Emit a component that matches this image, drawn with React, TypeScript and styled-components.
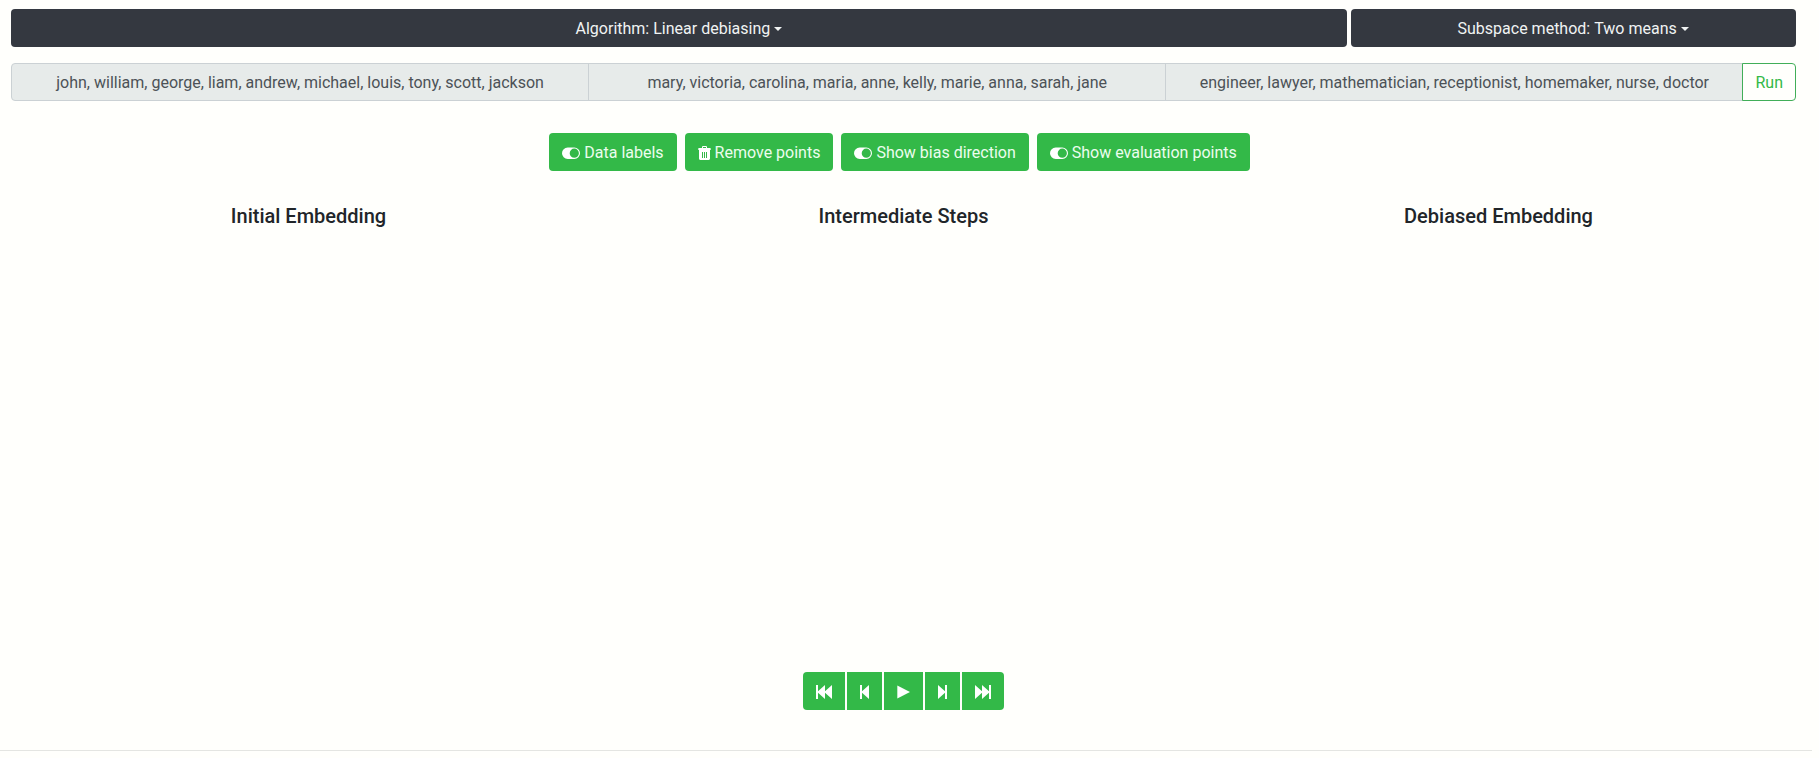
import React from "react";
import styled, { createGlobalStyle } from "styled-components";

const GlobalStyle = createGlobalStyle`
  *, *::before, *::after { box-sizing: border-box; }
  body {
    margin: 0;
    background: #fffffc;
    color: #212529;
    font-family: Roboto, "Liberation Sans", sans-serif;
    font-size: 16px;
    line-height: 24px;
  }
`;

const Page = styled.div`
  padding-right: 7px;
`;

const Main = styled.main`
  display: flex;
  flex-direction: column;
  padding: 9px 16px 0 11px;
`;

const MethodBar = styled.div`
  display: flex;
  gap: 4px;
`;

const Picker = styled.label<{ $grow: number }>`
  flex: ${(p) => p.$grow} 1 0;
  display: flex;
  align-items: center;
  justify-content: center;
  gap: 4px;
  height: 38px;
  padding-top: 2px;
  border-radius: 4px;
  background: #343840;
  color: #f0f3f3;
  cursor: pointer;
`;

const PickerSelect = styled.select`
  appearance: none;
  border: 0;
  padding: 0;
  background: transparent;
  color: inherit;
  font: inherit;
  cursor: pointer;
`;

const Caret = styled.span`
  border-top: 4px solid currentColor;
  border-right: 4px solid transparent;
  border-left: 4px solid transparent;
`;

const WordForm = styled.form`
  display: flex;
  margin-top: 16px;
`;

const WordInput = styled.input`
  flex: 1 1 0;
  min-width: 0;
  height: 38px;
  margin: 0 -1px 0 0;
  padding: 6px 12px;
  border: 1px solid #cbd1d4;
  background: #e7ebea;
  color: #4c5257;
  font: inherit;
  text-align: center;

  &:first-child {
    border-radius: 4px 0 0 4px;
  }
`;

const RunButton = styled.button`
  position: relative;
  height: 38px;
  padding: 2px 12px 0;
  border: 1px solid #41ae58;
  border-radius: 0 4px 4px 0;
  background: #fffffc;
  color: #33b948;
  font: inherit;
  cursor: pointer;
`;

const Toolbar = styled.div`
  display: flex;
  justify-content: center;
  gap: 8px;
  margin-top: 32px;
  padding-right: 8px;
`;

const GreenButton = styled.button`
  display: flex;
  align-items: center;
  justify-content: center;
  gap: 4px;
  height: 38px;
  padding: 2px 13px 0;
  border: 0;
  border-radius: 4px;
  background: #33b948;
  color: #ecfdee;
  font: inherit;
  cursor: pointer;
`;

const Panels = styled.div`
  display: grid;
  grid-template-columns: repeat(3, 1fr);
  margin-top: 33px;
`;

const Panel = styled.section`
  min-height: 468px;
`;

const PanelTitle = styled.h5`
  margin: 0;
  font-size: 20px;
  font-weight: 500;
  line-height: 24px;
  text-align: center;
`;

const Playback = styled.div`
  display: flex;
  justify-content: center;
  gap: 2px;
`;

const PlayButton = styled(GreenButton)`
  border-radius: 0;

  &:first-child {
    border-radius: 4px 0 0 4px;
  }
  &:last-child {
    border-radius: 0 4px 4px 0;
  }
`;

const Divider = styled.hr`
  margin: 40px 0 0;
  border: 0;
  border-top: 1px solid #e4e5e2;
`;

const ToggleIcon = () => (
  <svg width="18" height="16" viewBox="0 0 18 16" aria-hidden="true">
    <path
      fill="#fff"
      fillRule="evenodd"
      d="M5.7 2.5h6.6a5.7 5.7 0 0 1 0 11.4H5.7a5.7 5.7 0 0 1 0-11.4Zm6.6 1.1a4.6 4.6 0 1 0 0 9.2 4.6 4.6 0 0 0 0-9.2Z"
    />
  </svg>
);

const TrashIcon = () => (
  <svg width="13" height="16" viewBox="0 0 13 16" aria-hidden="true">
    <path
      fill="#fff"
      fillRule="evenodd"
      d="M4 3V2.2C4 1.5 4.5 1 5.2 1h2.6C8.500 1 9 1.500 9 2.200V3h3.200c.3 0 .5.2.5.5V5H.3V3.500c0-.3.2-.5.5-.5Zm1 0h3V2H5ZM1 5h11v8.500c0 .8-.7 1.500-1.500 1.500h-8C1.700 15 1 14.300 1 13.500ZM4 7v6h1V7Zm2 0v6h1V7Zm2 0v6h1V7Z"
    />
  </svg>
);

const transportPaths = {
  first: { width: 16, d: "M0 1h2v6.2L9 1v6.2L16 1v14L9 8.8V15L2 8.8V15H0Z" },
  previous: { width: 9, d: "M0 1h2v6.2L9 1v14L2 8.8V15H0Z" },
  play: { width: 13, d: "M.3 1.4 13 8 .3 14.6Z" },
  next: { width: 9, d: "M9 1H7v6.2L0 1v14l7-6.2V15h2Z" },
  last: { width: 16, d: "M16 1h-2v6.2L7 1v6.2L0 1v14l7-6.2V15l7-6.2V15h2Z" },
};

type Transport = keyof typeof transportPaths;

const TransportIcon = ({ name }: { name: Transport }) => {
  const { width, d } = transportPaths[name];
  return (
    <svg width={width} height="16" viewBox={`0 0 ${width} 16`} aria-hidden="true">
      <path fill="#fff" d={d} />
    </svg>
  );
};

const methods = [
  { label: "Algorithm:", value: "Linear debiasing", grow: 3 },
  { label: "Subspace method:", value: "Two means", grow: 1 },
];

const wordSets = [
  { label: "First seed words", words: "john, william, george, liam, andrew, michael, louis, tony, scott, jackson" },
  { label: "Second seed words", words: "mary, victoria, carolina, maria, anne, kelly, marie, anna, sarah, jane" },
  { label: "Evaluation words", words: "engineer, lawyer, mathematician, receptionist, homemaker, nurse, doctor" },
];

const actions = [
  { label: "Data labels", Icon: ToggleIcon },
  { label: "Remove points", Icon: TrashIcon },
  { label: "Show bias direction", Icon: ToggleIcon },
  { label: "Show evaluation points", Icon: ToggleIcon },
];

const panels = ["Initial Embedding", "Intermediate Steps", "Debiased Embedding"];

const transport: { name: Transport; label: string }[] = [
  { name: "first", label: "First step" },
  { name: "previous", label: "Previous step" },
  { name: "play", label: "Play" },
  { name: "next", label: "Next step" },
  { name: "last", label: "Last step" },
];

export default function App() {
  return (
    <Page>
      <GlobalStyle />
      <Main>
        <MethodBar>
          {methods.map((m) => (
            <Picker key={m.label} $grow={m.grow}>
              {m.label}
              <PickerSelect defaultValue={m.value}>
                <option>{m.value}</option>
              </PickerSelect>
              <Caret />
            </Picker>
          ))}
        </MethodBar>
        <WordForm onSubmit={(e) => e.preventDefault()}>
          {wordSets.map((set) => (
            <WordInput key={set.label} type="text" aria-label={set.label} defaultValue={set.words} />
          ))}
          <RunButton type="submit">Run</RunButton>
        </WordForm>
        <Toolbar>
          {actions.map(({ label, Icon }) => (
            <GreenButton key={label} type="button">
              <Icon />
              {label}
            </GreenButton>
          ))}
        </Toolbar>
        <Panels>
          {panels.map((title) => (
            <Panel key={title}>
              <PanelTitle>{title}</PanelTitle>
            </Panel>
          ))}
        </Panels>
        <Playback>
          {transport.map(({ name, label }) => (
            <PlayButton key={name} type="button" aria-label={label}>
              <TransportIcon name={name} />
            </PlayButton>
          ))}
        </Playback>
      </Main>
      <Divider />
    </Page>
  );
}
